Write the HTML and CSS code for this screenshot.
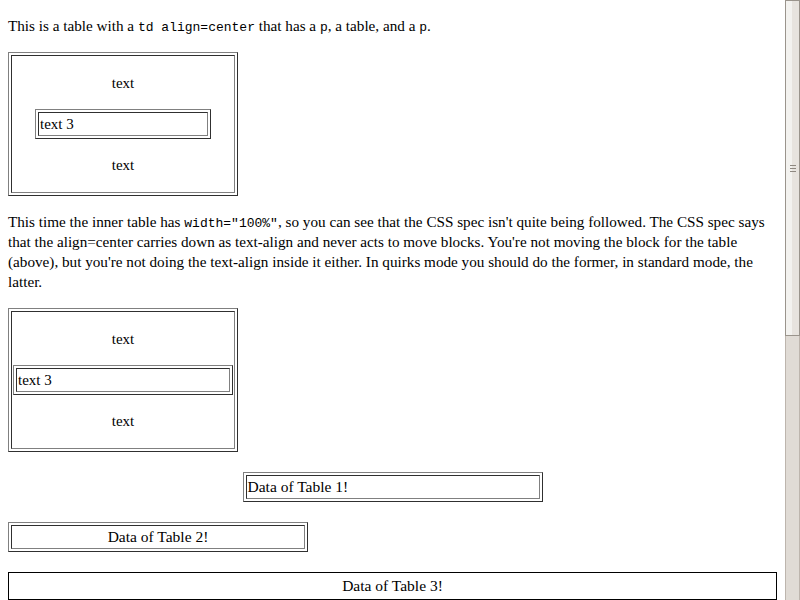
FILE: index.html
```html
<!DOCTYPE html>
<html>
<head>
<meta charset="utf-8">
<title>td align=center test</title>
<link rel="stylesheet" href="styles.css">
</head>
<body>
<p>This is a table with a <code>td align=center</code> that has a <code>p</code>, a table, and a <code>p</code>.</p>

<table class="bt box"><tr><td class="center">
<p>text</p>
<table class="bt inner w80"><tr><td>text 3</td></tr></table>
<p>text</p>
</td></tr></table>

<p>This time the inner table has <code>width="100%"</code>, so you can see that the CSS spec isn't quite being followed. The CSS spec says that the align=center carries down as text-align and never acts to move blocks. You're not moving the block for the table (above), but you're not doing the text-align inside it either. In quirks mode you should do the former, in standard mode, the latter.</p>

<table class="bt box"><tr><td class="center">
<p>text</p>
<table class="bt inner w100"><tr><td>text 3</td></tr></table>
<p>text</p>
</td></tr></table>

<table class="bt data data1"><tr><td>Data of Table 1!</td></tr></table>

<table class="bt data data2"><tr><td class="center">Data of Table 2!</td></tr></table>

<table class="data3"><tr><td class="center">Data of Table 3!</td></tr></table>

<div class="scrollbar"><div class="thumb"><span class="grip"></span></div></div>
</body>
</html>
```

FILE: styles.css
```css
html {
  overflow: hidden;
  background: #fff;
}
body {
  margin: 0;
  padding: 0 23px 8px 8px;
  display: flow-root;
  font-family: "Liberation Serif", "Times New Roman", serif;
  font-size: 15.2px;
  line-height: 20px;
  color: #000;
}
p {
  margin: 16px 0;
}
code {
  font-family: "Liberation Mono", "Courier New", monospace;
  font-size: 13px;
  line-height: 1;
}
table {
  border-collapse: separate;
  border-spacing: 2px;
  box-sizing: border-box;
  font-size: 15px;
}
td {
  padding: 1px;
  vertical-align: middle;
}
.bt {
  border: 1px solid;
  border-color: #808080 #303030 #303030 #808080;
}
.bt > tbody > tr > td {
  border: 1px solid;
  border-color: #303030 #808080 #808080 #303030;
}
.center {
  text-align: center;
}
.box {
  width: 230px;
}
.inner td {
  text-align: left;
}
.w80 {
  width: 80%;
  margin: 0 auto;
}
.w100 {
  width: 100%;
}
.data {
  font-size: 15.5px;
}
.data1 {
  width: 300px;
  margin: 20px auto 0;
}
.data2 {
  width: 300px;
  margin-top: 20px;
}
.data3 {
  width: 100%;
  margin-top: 20px;
  border: 1px solid #000;
  font-size: 15.5px;
}
.data3 td {
  padding: 1px;
}
.scrollbar {
  position: fixed;
  top: 0;
  right: 0;
  width: 15px;
  height: 100%;
  box-sizing: border-box;
  background: #e0dbd5;
  border-left: 1px solid #bdb5ad;
  border-right: 1px solid #bdb5ad;
}
.thumb {
  height: 336px;
  box-sizing: border-box;
  margin: 0 -1px;
  border: 1px solid #9a948c;
  background: linear-gradient(to right, #f3f2ef 0, #f3f2ef 50%, #e7e3de 50%, #e7e3de 100%);
  display: flex;
  align-items: center;
  justify-content: center;
}
.grip {
  width: 6px;
  height: 7px;
  background: linear-gradient(to bottom, #8e8880 0, #8e8880 1px, transparent 1px, transparent 3px, #8e8880 3px, #8e8880 4px, transparent 4px, transparent 6px, #8e8880 6px, #8e8880 7px);
}
```
